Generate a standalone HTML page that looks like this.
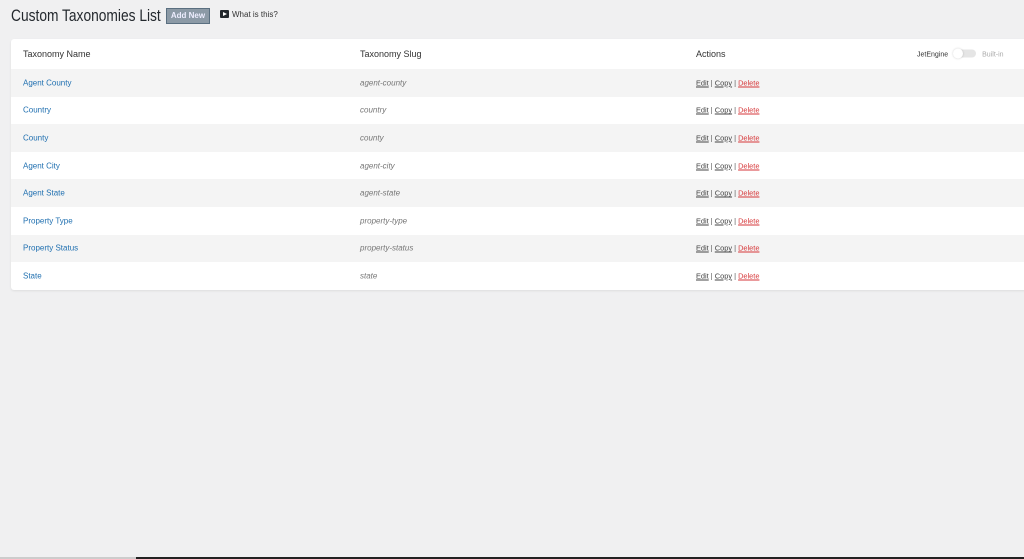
<!DOCTYPE html>
<html><head><style>
body{margin:0;width:1024px;height:559px;background:#f0f0f1;font-family:"Liberation Sans",sans-serif;position:relative;overflow:hidden}
h1{position:absolute;left:11px;top:6px;margin:0;font-weight:400;font-size:17px;color:#23282d;transform:scaleX(0.81);transform-origin:0 0;white-space:nowrap}
.btn{position:absolute;left:166px;top:8px;width:42px;height:14px;background:#8c9aa6;border:1px solid #5a6f80;color:#eef;font-size:8px;font-weight:bold;text-align:center;line-height:14px}
.wi{position:absolute;left:220px;top:10px;font-size:8px;color:#333}
.wi i{display:inline-block;width:9px;height:8px;background:#23282d;border-radius:1px;vertical-align:-1px;margin-right:3px;position:relative}
.wi i:after{content:"";position:absolute;left:3px;top:2px;border-left:4px solid #fff;border-top:2px solid transparent;border-bottom:2px solid transparent}
.card{position:absolute;left:11px;top:39px;width:1020px;height:251px;background:#fff;border-radius:3px;box-shadow:0 1px 2px rgba(0,0,0,.08);overflow:hidden}
.row{height:27.6px;position:relative;font-size:8px}
.row.g{background:#f4f4f4}
.hd{height:30px;font-size:9px;color:#333}
.row>span{position:absolute;top:50%;transform:translateY(-50%)}
.c1{left:12px;color:#2271b1}.c2{left:349px;color:#777;font-style:italic}.c3{left:685px;color:#555;font-size:7.4px}
.hd .c1,.hd .c2,.hd .c3{color:#333;font-style:normal;font-size:9px}
.c3 u{color:#444}.c3 b{font-weight:normal;color:#d63638;text-decoration:underline}
.tg{position:absolute;left:906px;top:50%;transform:translateY(-50%);font-size:7px;color:#333;white-space:nowrap}
.sw{display:inline-block;width:22px;height:8px;background:#e5e5e5;border-radius:4px;vertical-align:-1px;margin:0 6px;position:relative}
.sw:before{content:"";position:absolute;left:-1px;top:-1px;width:10px;height:10px;border-radius:50%;background:#fff;box-shadow:0 0 2px rgba(0,0,0,.2)}
.bi{color:#aaa}
.bar{position:absolute;left:136px;right:0;top:557px;height:2px;background:#222}
.bar0{position:absolute;left:0;width:136px;top:557px;height:2px;background:#ccc}
</style></head><body>
<h1>Custom Taxonomies List</h1>
<div class="btn">Add New</div>
<div class="wi"><i></i>What is this?</div>
<div class="card">
<div class="row hd"><span class="c1">Taxonomy Name</span><span class="c2">Taxonomy Slug</span><span class="c3">Actions</span><div class="tg">JetEngine<i class="sw"></i><em class="bi" style="font-style:normal">Built-in</em></div></div>
<div class="row g"><span class="c1">Agent County</span><span class="c2">agent-county</span><span class="c3"><u>Edit</u> | <u>Copy</u> | <b>Delete</b></span></div>
<div class="row"><span class="c1">Country</span><span class="c2">country</span><span class="c3"><u>Edit</u> | <u>Copy</u> | <b>Delete</b></span></div>
<div class="row g"><span class="c1">County</span><span class="c2">county</span><span class="c3"><u>Edit</u> | <u>Copy</u> | <b>Delete</b></span></div>
<div class="row"><span class="c1">Agent City</span><span class="c2">agent-city</span><span class="c3"><u>Edit</u> | <u>Copy</u> | <b>Delete</b></span></div>
<div class="row g"><span class="c1">Agent State</span><span class="c2">agent-state</span><span class="c3"><u>Edit</u> | <u>Copy</u> | <b>Delete</b></span></div>
<div class="row"><span class="c1">Property Type</span><span class="c2">property-type</span><span class="c3"><u>Edit</u> | <u>Copy</u> | <b>Delete</b></span></div>
<div class="row g"><span class="c1">Property Status</span><span class="c2">property-status</span><span class="c3"><u>Edit</u> | <u>Copy</u> | <b>Delete</b></span></div>
<div class="row"><span class="c1">State</span><span class="c2">state</span><span class="c3"><u>Edit</u> | <u>Copy</u> | <b>Delete</b></span></div>
</div>
<div class="bar0"></div><div class="bar"></div>
</body></html>
